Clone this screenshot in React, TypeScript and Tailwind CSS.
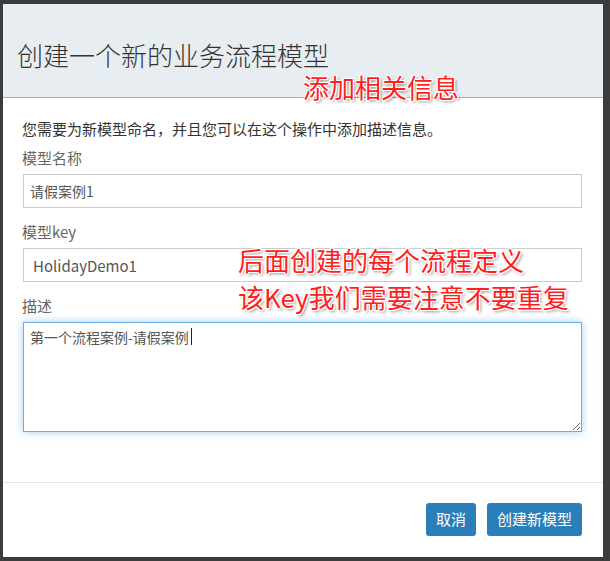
export default function App() {
  const note =
    'absolute whitespace-nowrap text-[26px] leading-[34px] text-[#ff1e1e] [text-shadow:1px_1px_0_#fff,-1px_-1px_0_#fff,1px_-1px_0_#fff,-1px_1px_0_#fff,0_1px_0_#fff,1px_0_0_#fff,2px_2px_3px_rgba(0,0,0,0.45)]';

  return (
    <div className="relative w-[610px] h-[561px] bg-[#3c3c3c] pt-[4px] pl-[3px] font-['Noto_Sans_CJK_SC',sans-serif]">
      <div className="flex flex-col w-[600px] h-[553px] bg-white">
        {/* Header */}
        <div className="h-[94px] bg-[#e8edf1] border-b border-[#a9adbb] pl-[14px] pt-[34px]">
          <h2 className="text-[26px] leading-[34px] font-light text-[#333]">创建一个新的业务流程模型</h2>
        </div>

        {/* Body */}
        <div className="flex flex-col pl-[19px] pr-[21px] pt-[20px] h-[385px] border-b border-[#e5e5e5]">
          <p className="text-[15px] leading-[22px] text-[#333]">
            您需要为新模型命名，并且您可以在这个操作中添加描述信息。
          </p>

          <label className="mt-[7px] text-[15px] leading-[22px] text-[#666]">模型名称</label>
          <input
            readOnly
            defaultValue="请假案例1"
            className="mt-[5px] ml-[1px] h-[34px] border border-[#ccc] px-[6px] text-[14px] text-[#555] outline-none"
          />

          <label className="mt-[13px] text-[15px] leading-[22px] text-[#666]">模型key</label>
          <input
            readOnly
            defaultValue="HolidayDemo1"
            className="mt-[5px] ml-[1px] h-[34px] border border-[#ccc] px-[9px] text-[15px] text-[#555] outline-none"
          />

          <label className="mt-[13px] text-[15px] leading-[22px] text-[#666]">描述</label>
          <div className="relative mt-[5px] ml-[1px]">
            <textarea
              readOnly
              defaultValue="第一个流程案例-请假案例"
              className="block w-full h-[110px] border border-[#66afe9] shadow-[0_0_8px_rgba(102,175,233,0.6)] pl-[6px] pr-[4px] py-[4px] text-[14px] leading-[20px] text-[#555] outline-none"
            />
            <div className="absolute left-[168px] top-[6px] w-px h-[17px] bg-[#222]" />
          </div>
        </div>

        {/* Footer */}
        <div className="flex justify-end gap-[11px] pt-[20px] pr-[21px]">
          <button className="h-[33px] w-[50px] rounded-[3px] bg-[#2a7fba] text-[15px] text-white">取消</button>
          <button className="h-[33px] w-[95px] rounded-[3px] bg-[#2a7fba] text-[15px] text-white">创建新模型</button>
        </div>
      </div>

      {/* Annotations */}
      <div className={`${note} left-[303px] top-[70px]`}>添加相关信息</div>
      <div className={`${note} left-[238px] top-[243px]`}>后面创建的每个流程定义</div>
      <div className={`${note} left-[238px] top-[280px]`}>该Key我们需要注意不要重复</div>
    </div>
  );
}
